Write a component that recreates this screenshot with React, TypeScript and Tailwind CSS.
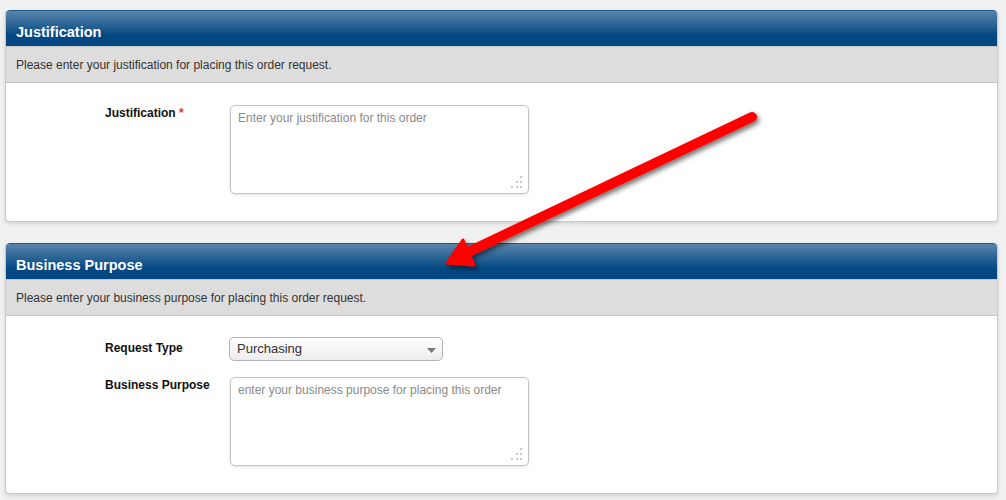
import React from "react";

function Grip() {
  return (
    <svg width="12" height="12" viewBox="0 0 12 12" className="absolute right-[5px] bottom-[5px]">
      {[
        [9, 0],
        [5, 5],
        [9, 5],
        [0, 10],
        [5, 10],
        [9, 10],
      ].map(([x, y], i) => (
        <rect key={i} x={x} y={y} width="2" height="2" fill="#c8c8c8" />
      ))}
    </svg>
  );
}

function TextArea({ placeholder }: { placeholder: string }) {
  return (
    <div className="relative w-[299px] h-[89px] rounded-[5px] border border-[#c4c4c4] bg-white shadow-[0_1px_3px_rgba(0,0,0,0.12)] px-[7px] pt-[3px] text-[12px] text-[#8a8a8a]">
      {placeholder}
      <Grip />
    </div>
  );
}

function Panel({
  title,
  subtitle,
  children,
  bodyClass,
}: {
  title: string;
  subtitle: string;
  children: React.ReactNode;
  bodyClass: string;
}) {
  return (
    <div className="rounded-[4px] border-x border-b border-[#c9c9c9] bg-white shadow-[0_2px_4px_rgba(0,0,0,0.12)] overflow-hidden">
      <div className="h-[36px] rounded-t-[4px] border-t border-[#1f5a8c] bg-[linear-gradient(to_bottom,#5885ad_0%,#2f6797_35%,#034882_70%,#034882_100%)] pl-[10px] pt-[8px] flex items-center">
        <span className="text-white font-bold text-[14.5px]">{title}</span>
      </div>
      <div className="h-[37px] bg-[#dddddd] border-t border-[#c8c8c8] border-b border-b-[#c4c4c4] pl-[10px] flex items-center text-[12px] text-[#333333]">
        {subtitle}
      </div>
      <div className={bodyClass}>{children}</div>
    </div>
  );
}

export default function App() {
  return (
    <div
      className="relative w-[1006px] h-[500px] bg-[#f1f1f1] pl-[5px] pr-[8px] pt-[10px]"
      style={{ fontFamily: '"Liberation Sans", Arial, sans-serif' }}
    >
      <Panel
        title="Justification"
        subtitle="Please enter your justification for placing this order request."
        bodyClass="pt-[22px] pb-[27px] pl-[99px] flex"
      >
        <div className="w-[125px] pt-[1px] leading-[14px] text-[12px] font-bold text-[#111111]">
          Justification <span className="text-[#d33]">*</span>
        </div>
        <TextArea placeholder="Enter your justification for this order" />
      </Panel>

      <div className="h-[21px]" />

      <Panel
        title="Business Purpose"
        subtitle="Please enter your business purpose for placing this order request."
        bodyClass="pt-[21px] pb-[27px] pl-[99px] flex flex-col gap-[16px]"
      >
        <div className="flex">
          <div className="w-[124px] pt-[4px] leading-[14px] text-[12px] font-bold text-[#111111]">Request Type</div>
          <div className="relative w-[214px] h-[24px] rounded-[5px] border border-[#b5b5b5] bg-[linear-gradient(to_bottom,#ffffff,#ececec)] pl-[7px] flex items-center text-[13px] text-[#333333]">
            Purchasing
            <svg width="9" height="5" viewBox="0 0 9 5" className="absolute right-[6px] top-[10px]">
              <path d="M0 0 L9 0 L4.5 5 Z" fill="#777777" />
            </svg>
          </div>
        </div>
        <div className="flex">
          <div className="w-[125px] pt-[1px] leading-[14px] text-[12px] font-bold text-[#111111]">Business Purpose</div>
          <TextArea placeholder="enter your business purpose for placing this order" />
        </div>
      </Panel>

      <svg className="absolute left-0 top-0 pointer-events-none" width="1006" height="500">
        <defs>
          <filter id="sh" x="-20%" y="-20%" width="140%" height="140%">
            <feDropShadow dx="2" dy="3" stdDeviation="2.5" floodColor="#000" floodOpacity="0.55" />
          </filter>
        </defs>
        <g filter="url(#sh)">
          <line x1="752" y1="117" x2="464" y2="254" stroke="#ff0000" strokeWidth="10" strokeLinecap="round" />
          <path d="M447 263 L463 240 L474 265 Z" fill="#ff0000" stroke="#ff0000" strokeWidth="3" strokeLinejoin="round" />
        </g>
      </svg>
    </div>
  );
}
